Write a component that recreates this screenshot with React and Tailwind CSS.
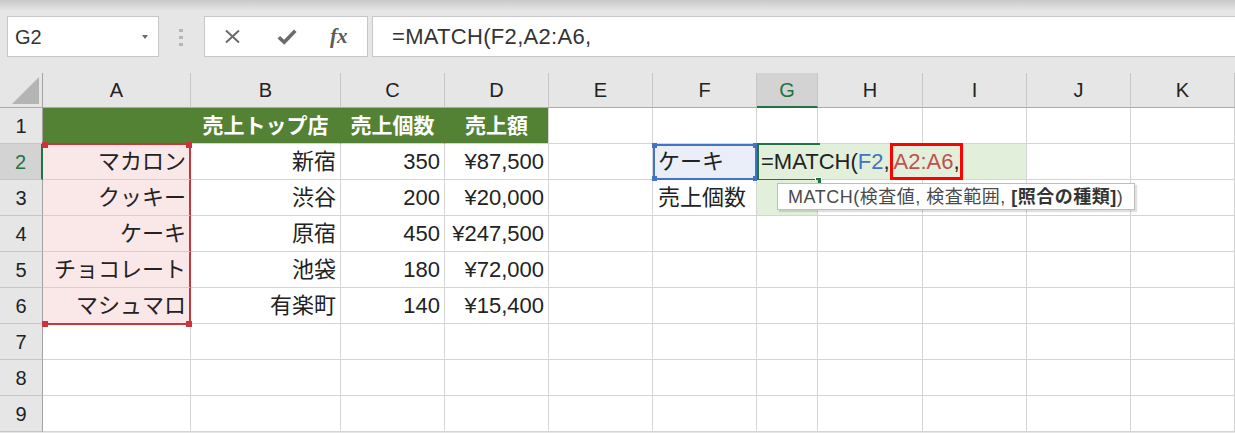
import React from "react";

const COLS = ["A", "B", "C", "D", "E", "F", "G", "H", "I", "J", "K"];

const DATA = {
  2: { A: "マカロン", B: "新宿", C: "350", D: "¥87,500", F: "ケーキ" },
  3: { A: "クッキー", B: "渋谷", C: "200", D: "¥20,000", F: "売上個数" },
  4: { A: "ケーキ", B: "原宿", C: "450", D: "¥247,500" },
  5: { A: "チョコレート", B: "池袋", C: "180", D: "¥72,000" },
  6: { A: "マシュマロ", B: "有楽町", C: "140", D: "¥15,400" },
};

const HEAD = { B: "売上トップ店", C: "売上個数", D: "売上額" };

function Toolbar() {
  return (
    <div className="h-[73px] flex items-start pt-[16px] bg-[linear-gradient(to_bottom,#c9c9c9,#e6e6e6_11px)]">
      <div className="ml-[7px] w-[152px] h-[41px] bg-white border border-[#c6c6c6] flex items-center justify-between pl-[7px] pr-[10px]">
        <span className="text-[20px] text-[#333] leading-none">G2</span>
        <span className="w-0 h-0 border-x-[3px] border-t-[4px] border-x-transparent border-t-[#6a6a6a]" />
      </div>
      <div className="ml-[20px] mt-[13px] flex flex-col gap-[4px]">
        <div className="w-[4px] h-[3px] bg-[#b6b6b6]" />
        <div className="w-[4px] h-[3px] bg-[#b6b6b6]" />
        <div className="w-[4px] h-[3px] bg-[#b6b6b6]" />
      </div>
      <div className="ml-[21px] w-[164px] h-[41px] bg-white border border-[#c6c6c6] flex items-center pl-[19px]">
        <svg width="17" height="15" viewBox="0 0 17 15">
          <path d="M2 1.5 L15 13.5 M15 1.5 L2 13.5" stroke="#6b6b6b" strokeWidth="2" fill="none" />
        </svg>
        <svg className="ml-[36px]" width="20" height="16" viewBox="0 0 20 16">
          <path d="M1.8 8.2 L7.2 13.2 L18.3 1.8" stroke="#6b6b6b" strokeWidth="3.6" fill="none" strokeLinejoin="miter" />
        </svg>
        <span className="ml-[33px] font-['Liberation_Serif',serif] italic font-bold text-[21px] text-[#5a5a5a] leading-none">
          fx
        </span>
      </div>
      <div className="ml-[4px] flex-1 h-[41px] bg-white border border-r-0 border-[#c6c6c6] flex items-center pl-[19px]">
        <span className="text-[22px] text-[#333] leading-none whitespace-nowrap tracking-[0.3px]">=MATCH(F2,A2:A6,</span>
      </div>
    </div>
  );
}

const RED = "bg-[#c6363d]";
const BLUE = "bg-[#4472c4]";

function Grid() {
  const cells = [];
  cells.push(
    <div key="corner" className="relative bg-[#e6e6e6] border-r border-b border-r-[#a3a3a3] border-b-[#ababab]">
      <svg className="absolute inset-0" width="43" height="35" viewBox="0 0 43 35">
        <polygon points="39,4 39,31 12,31" fill="#b4b4b4" />
      </svg>
    </div>
  );
  COLS.forEach((c) => {
    const sel = c === "G";
    cells.push(
      <div
        key={"h" + c}
        className={
          "flex items-center justify-center text-[20px] leading-none border-r border-r-[#c6c6c6] " +
          (sel
            ? "bg-[#d3d3d3] text-[#217346] border-b-2 border-b-[#217346]"
            : "bg-[#e6e6e6] text-[#222] border-b border-b-[#ababab]")
        }
      >
        {c}
      </div>
    );
  });

  for (let r = 1; r <= 9; r++) {
    const rsel = r === 2;
    cells.push(
      <div
        key={"r" + r}
        className={
          "flex items-center justify-center text-[20px] leading-none border-b border-b-[#c4c4c4] " +
          (rsel
            ? "bg-[#d3d3d3] text-[#217346] border-r-2 border-r-[#217346]"
            : "bg-[#e6e6e6] text-[#222] border-r border-r-[#a3a3a3]")
        }
      >
        {r}
      </div>
    );
    for (let i = 0; i < COLS.length; i++) {
      const c = COLS[i];

      if (r === 1 && ["A", "B", "C", "D"].includes(c)) {
        cells.push(
          <div
            key={r + c}
            className={
              "bg-[#548235] text-white font-bold text-[21px] leading-none flex items-center justify-center border-b border-r whitespace-nowrap " +
              (c === "A" ? "border-b-[#c6363d] " : "border-b-[#d4d4d4] ") +
              (c === "D" ? "border-r-[#d4d4d4]" : "border-r-[#548235]")
            }
          >
            {HEAD[c] || ""}
          </div>
        );
        continue;
      }

      if (r === 2 && c === "G") {
        cells.push(
          <div
            key={r + c}
            className="relative col-span-3 bg-[#e2efda] border-r border-b border-[#d4d4d4] flex items-center pl-[4px] text-[22px] leading-none whitespace-nowrap text-[#222]"
          >
            <div className="absolute left-0 -top-[1px] w-[63px] h-[38px] border-t-2 border-l-2 border-b-2 border-[#217346]" />
            <div className="absolute left-[58px] top-[33px] w-[7px] h-[7px] bg-[#217346] border border-white" />
            <span>=MATCH(</span>
            <span className="text-[#4472c4]">F2</span>
            <span>,</span>
            <span className="h-[37px] flex items-center border-[3px] border-[#ff0000] pl-[1px]">
              <span className="text-[#c0504d]">A2:A6</span>
              <span>,</span>
            </span>
          </div>
        );
        i += 2;
        continue;
      }

      const d = (DATA[r] && DATA[r][c]) || "";
      const pink = c === "A" && r >= 2 && r <= 6;

      if (pink) {
        cells.push(
          <div
            key={r + c}
            className={
              "relative bg-[#fae7e8] border-r-2 border-r-[#c6363d] border-b text-[22px] leading-none flex items-center justify-end pr-[3px] whitespace-nowrap text-[#222] " +
              (r === 2 ? "border-t border-t-[#c6363d] " : "") +
              (r === 6 ? "border-b-[#c6363d]" : "border-b-[#dccccd]")
            }
          >
            {r === 2 && (
              <>
                <div className={"absolute -left-[1px] -top-[3px] w-[6px] h-[6px] " + RED} />
                <div className={"absolute -right-[3px] -top-[3px] w-[6px] h-[6px] " + RED} />
              </>
            )}
            {r === 6 && (
              <>
                <div className={"absolute -left-[1px] -bottom-[4px] w-[6px] h-[6px] " + RED} />
                <div className={"absolute -right-[3px] -bottom-[4px] w-[6px] h-[6px] " + RED} />
              </>
            )}
            {d}
          </div>
        );
        continue;
      }

      if (r === 2 && c === "F") {
        cells.push(
          <div
            key={r + c}
            className="relative bg-[#e9eef9] border-2 border-[#4472c4] text-[22px] leading-none flex items-center justify-start pl-[3px] whitespace-nowrap text-[#222]"
          >
            <div className={"absolute -left-[3px] -top-[3px] w-[5px] h-[5px] " + BLUE} />
            <div className={"absolute -right-[3px] -top-[3px] w-[5px] h-[5px] " + BLUE} />
            <div className={"absolute -left-[3px] -bottom-[3px] w-[5px] h-[5px] " + BLUE} />
            <div className={"absolute -right-[3px] -bottom-[3px] w-[5px] h-[5px] " + BLUE} />
            {d}
          </div>
        );
        continue;
      }

      if (r === 3 && c === "G") {
        cells.push(
          <div key={r + c} className="relative bg-[#e2efda] border-r border-b border-[#d4d4d4]">
            <div className="absolute z-10 left-[20px] top-[3px] w-[358px] h-[27px] bg-white border border-[#bdbdbd] shadow-[2px_2px_1px_rgba(0,0,0,0.12)] flex items-center pl-[10px] text-[18px] leading-none tracking-[0.5px] text-[#4a4a4a] whitespace-nowrap">
              <span>
                MATCH(検査値, 検査範囲, <span className="font-bold text-[#333]">[照合の種類]</span>)
              </span>
            </div>
          </div>
        );
        continue;
      }

      const isF = c === "F";
      cells.push(
        <div
          key={r + c}
          className={
            "bg-white border-r border-b border-[#d4d4d4] text-[22px] leading-none flex items-center whitespace-nowrap text-[#222] " +
            (r === 7 && c === "A" ? "border-t border-t-[#c6363d] " : "") +
            (isF ? "justify-start pl-[5px]" : "justify-end pr-[4px]")
          }
        >
          {d}
        </div>
      );
    }
  }

  return (
    <div className="grid grid-cols-[43px_148px_150px_104px_104px_104px_104px_61px_105px_104px_104px_1fr] grid-rows-[35px_repeat(9,36px)] bg-white">
      {cells}
    </div>
  );
}

export default function App() {
  return (
    <div className="w-[1235px] h-[433px] overflow-hidden bg-[#e6e6e6] font-['Liberation_Sans','Noto_Sans_CJK_JP',sans-serif] text-[#222]">
      <Toolbar />
      <Grid />
    </div>
  );
}
